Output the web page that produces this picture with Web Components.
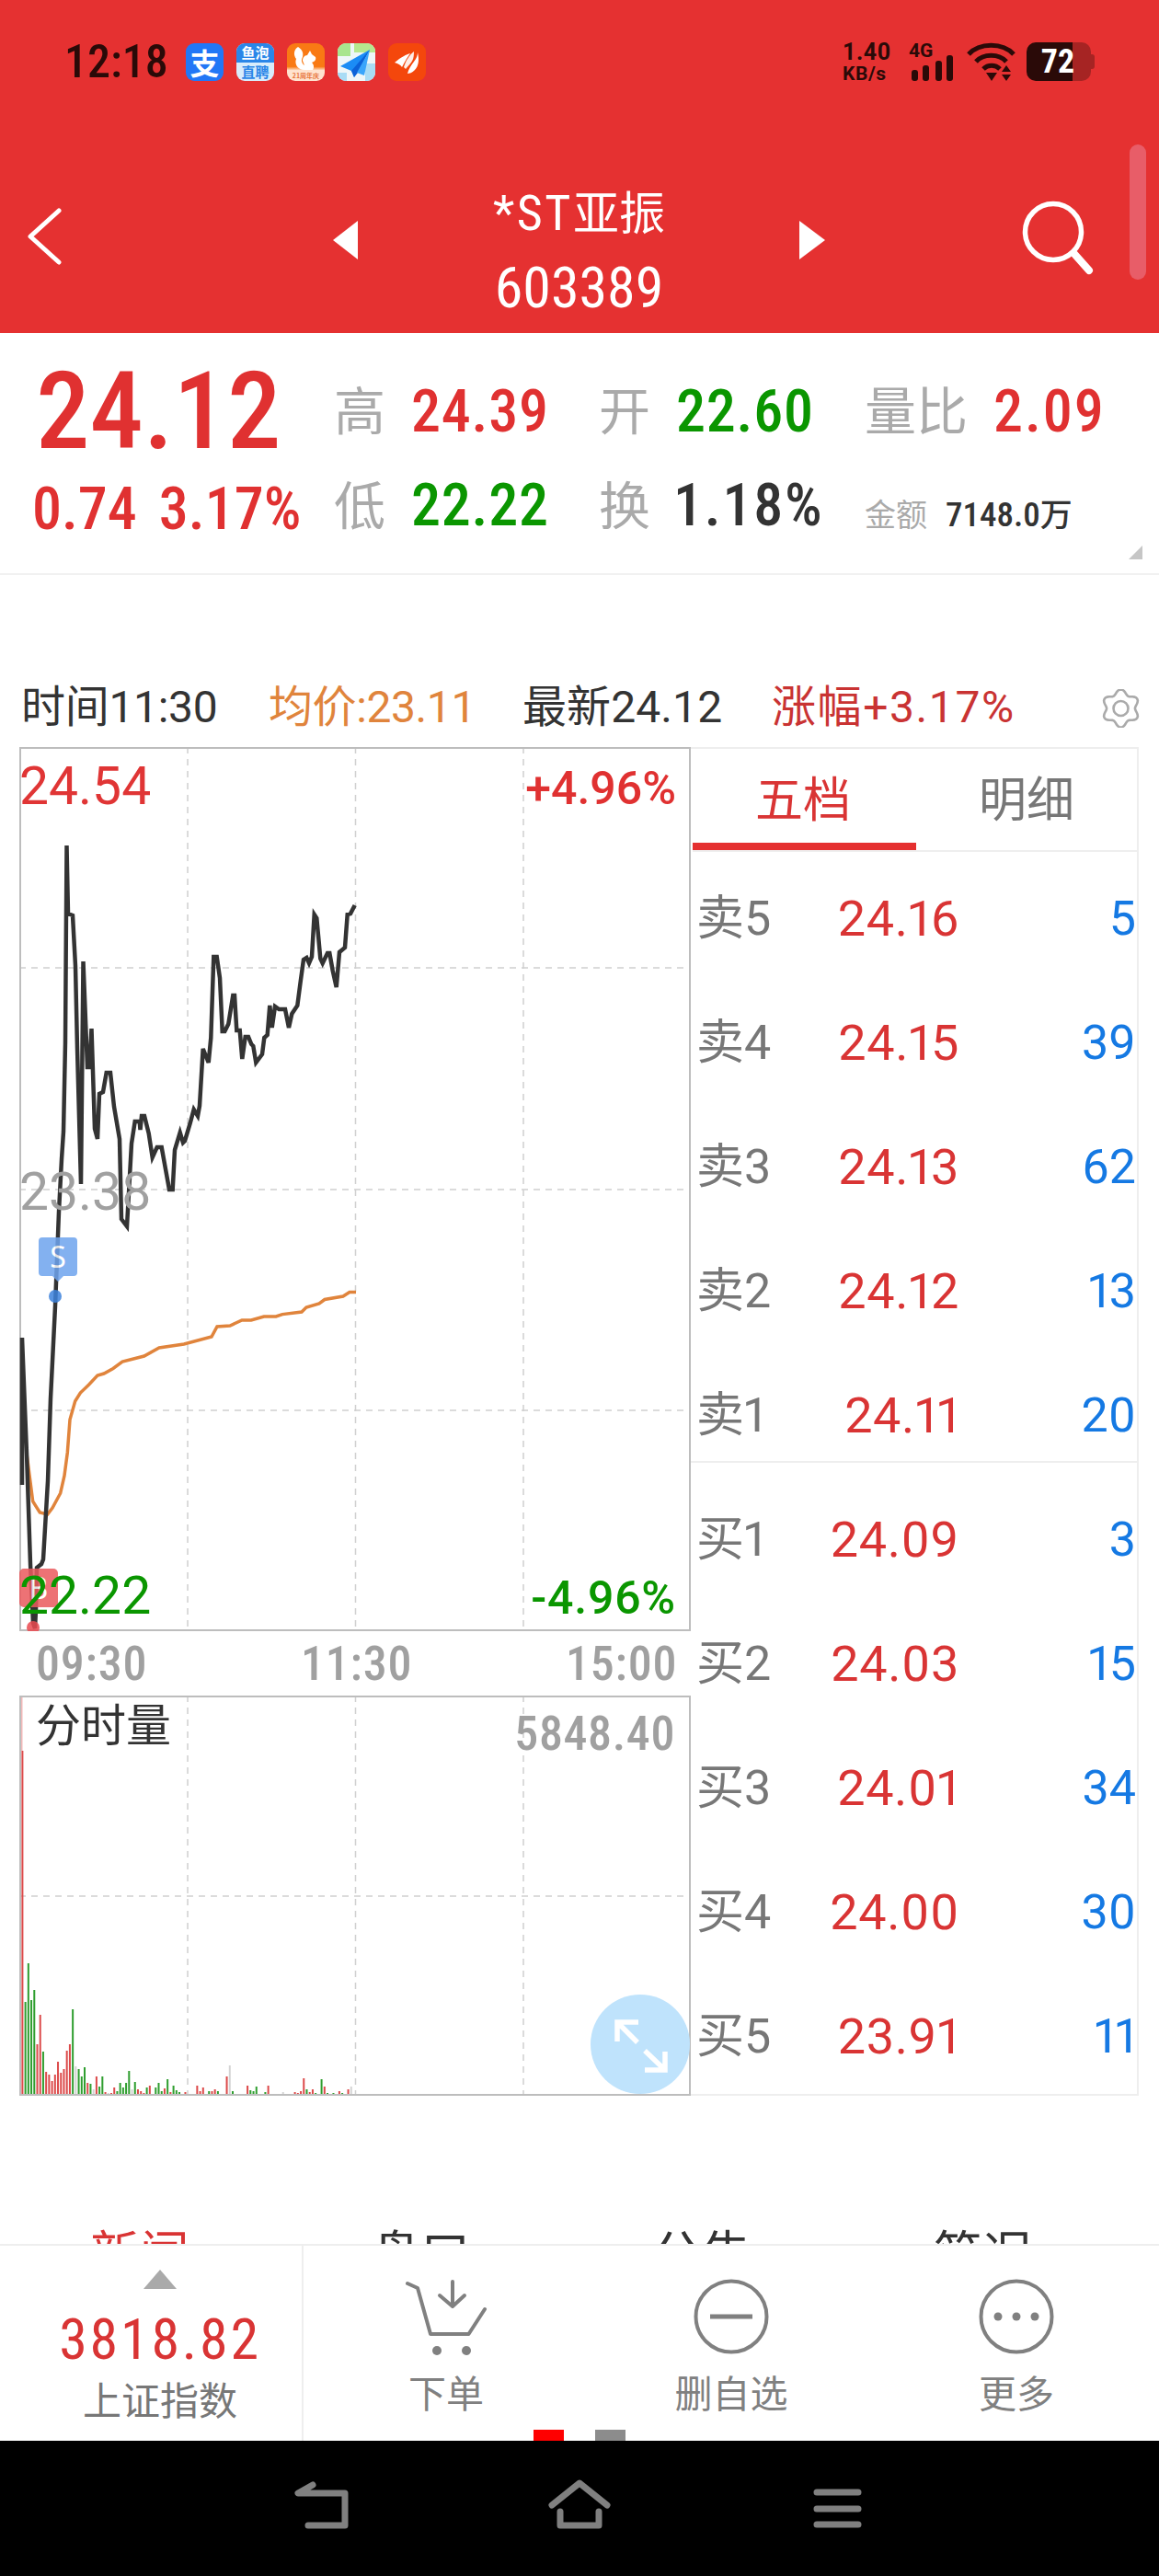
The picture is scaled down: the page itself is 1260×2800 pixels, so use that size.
<!doctype html>
<html lang="zh">
<head>
<meta charset="utf-8">
<title>*ST亚振</title>
<style>
html, body { margin: 0; background: #fff; }
body { width: 1260px; height: 2800px; overflow: hidden; font-family: Roboto, "Noto Sans CJK SC", sans-serif; }
</style>
</head>
<body>
<stock-page>
  <status-bar></status-bar>
  <nav-header name="*ST亚振" code="603389"></nav-header>
  <quote-panel></quote-panel>
  <info-row></info-row>
  <div style="display:flex;padding-left:21px;width:1219px">
    <div style="width:730px;flex:none">
      <price-chart></price-chart>
      <time-axis></time-axis>
      <volume-chart></volume-chart>
    </div>
    <order-book></order-book>
  </div>
  <news-tabs></news-tabs>
  <bottom-bar slot="footer"></bottom-bar>
  <system-nav slot="footer"></system-nav>
</stock-page>

<script>
const DIN = `Roboto, "Noto Sans CJK SC", sans-serif`;
const RED = "#e03131", GREEN = "#0a9600", DARK = "#333";

function define(name, html, init) {
    const template = document.createElement("template");
    template.innerHTML = html;
    customElements.define(name, class extends HTMLElement {
        constructor() {
            super();
            this.attachShadow({ mode: "open" });
            this.shadowRoot.appendChild(template.content.cloneNode(true));
        }
        connectedCallback() {
            if (init) init(this, this.shadowRoot);
        }
    });
}

define("stock-page", `
<style>
:host { display: block; width: 1260px; height: 2800px; }
main { height: 2439px; overflow: hidden; }
</style>
<main><slot></slot></main>
<slot name="footer"></slot>
`);

define("status-bar", `
<style>
:host { display: flex; align-items: center; height: 134px; background: #e53131; padding: 0 70px 0 70px; box-sizing: border-box; color: #2a0a08; }
.time { font: semi-condensed 500 50px/1 ${DIN}; width: 132px; }
.apps { display: flex; gap: 14px; margin-right: auto; }
.app { width: 41px; height: 41px; border-radius: 9px; overflow: hidden; display: block; font-family: "Noto Sans CJK SC", sans-serif; }
.zhi { background: #2277f6; color: #fff; font-size: 32px; font-weight: 700; line-height: 41px; text-align: center; overflow: visible; }
.yu { background: #d8ecfb; color: #2a86e8; font-size: 15px; font-weight: 700; line-height: 19px; text-align: center; }
.yu div { background: #2a86e8; color: #fff; height: 21px; line-height: 20px; }
.speed { width: 72px; text-align: left; }
.speed b { display: block; font: 700 25px/25px ${DIN}; letter-spacing: .6px; }
.speed span { display: block; font: 700 21px/22px ${DIN}; letter-spacing: .6px; }
.sig { width: 49px; height: 42px; }
.sig span { display: block; height: 18px; font: 700 21px/18px ${DIN}; }
svg { display: block; }
.sig svg { margin-top: -18px; }
.battery { width: 70px; height: 42px; border-radius: 10px; margin-left: 11px; display: flex; align-items: center; justify-content: center; background: linear-gradient(90deg, #2a0a08 50px, #a62423 50px); color: #fff; font: semi-condensed 700 36px/1 ${DIN}; padding-right: 2px; box-sizing: border-box; }
.nub { width: 4px; height: 16px; background: #a62423; border-radius: 0 3px 3px 0; }
</style>
<div class="time">12:18</div>
<div class="apps">
  <div class="app zhi">支</div>
  <div class="app yu"><div>鱼泡</div>直聘</div>
  <svg class="app" viewBox="0 0 41 41">
    <defs><linearGradient id="uc" x1="0" y1="0" x2="0" y2="1"><stop offset=".62" stop-color="#f97a14"/><stop offset=".72" stop-color="#ffe3cf"/></linearGradient></defs>
    <rect width="41" height="41" fill="url(#uc)"/>
    <path d="M12 4c-5 3-5 9-2 13-2 5 1 12 9 12h9c2-3 1-6-1-8 3-1 5-3 4-6l-4-3-2-4-3 5c-3 0-5 3-5 6l2 5c-3-2-4-6-2-9 1-4 0-8-5-11z" fill="#fff"/>
    <text x="20.5" y="38" font-size="7" font-weight="700" text-anchor="middle" fill="#e8763c" font-family="Noto Sans CJK SC">21周年庆</text>
  </svg>
  <svg class="app" viewBox="0 0 41 41">
    <rect width="41" height="41" fill="#eef6f8"/>
    <path d="M0 0h14v14H0z" fill="#a8e58e"/><path d="M18 0h23v10H18z" fill="#b6e88f"/>
    <path d="M30 22h11v19H30zM0 32h10v9H0z" fill="#a9dcf5"/>
    <path d="M35 7 3 25l12 5 3 7z" fill="#1b8cf5"/><path d="M35 7 15 30l3 7 4-5z" fill="#0b62d8"/><path d="M35 7 21 32l8 3z" fill="#39a5fb"/>
  </svg>
  <svg class="app" viewBox="0 0 41 41">
    <rect width="41" height="41" fill="#f4470c"/>
    <path d="M7 21c7-6 13-9 17-10-3 4-6 9-9 15-1-2-4-4-8-5z" fill="#fff"/>
    <path d="M17 26c2-7 6-13 11-17 0 6-1 9-3 12l-6 7z" fill="#fff" opacity=".9"/>
    <path d="M21 33c1-5 4-9 7-13 3-4 4-7 4-10 2 8 1 15-3 19-3 3-6 4-8 4z" fill="#fff"/>
  </svg>
</div>
<div class="speed"><b>1.40</b><span>KB/s</span></div>
<div class="sig"><span>4G</span>
<svg width="49" height="42" viewBox="0 0 49 42">
  <g fill="#2a0a08"><rect x="3" y="30" width="7" height="12" rx="3"/><rect x="15" y="25" width="7" height="17" rx="3"/><rect x="29" y="20" width="7" height="22" rx="3"/><rect x="41" y="14" width="7" height="28" rx="3"/></g>
</svg></div>
<svg width="54" height="42" viewBox="0 0 54 42" style="margin-left:14px" fill="none" stroke="#2a0a08" stroke-width="5">
  <path d="M2 13C14 0 39 0 51 13"/><path d="M10 21C18 12 35 12 43 21"/>
  <path d="M18 29c5-5 13-5 18 0"/>
  <path d="M21 33h12l-6 9z" fill="#2a0a08" stroke="none"/>
  <path d="M43 25l5 7H38zM43 42l5-7H38z" fill="#2a0a08" stroke="none"/>
</svg>
<div class="battery">72</div><div class="nub"></div>
`);

define("nav-header", `
<style>
:host { display: grid; grid-template-columns: 362px 28px 479px 28px 1fr; align-items: start; height: 228px; background: #e53131; color: #fff; position: relative; }
svg { display: block; }
.back { padding: 91px 0 0 28px; }
.tri { margin-top: 106px; }
.title { text-align: center; padding-top: 54px; }
.name { font: 400 50px/80px "Noto Sans CJK SC", sans-serif; height: 84px; }
.name b { font: semi-condensed 400 54px/80px ${DIN}; letter-spacing: 2.6px; }
.code { font: semi-condensed 400 62px/81px ${DIN}; }
.search { padding: 84px 0 0 213px; }
.scroll { position: absolute; left: 1228px; top: 23px; width: 18px; height: 147px; border-radius: 9px; background: #e85d68; }
</style>
<div class="back"><svg width="42" height="64" viewBox="0 0 42 64" fill="none" stroke="#fff" stroke-width="5" stroke-linecap="round" stroke-linejoin="round"><path d="M36 4 5 32 36 60"/></svg></div>
<svg class="tri" width="28" height="42" viewBox="0 0 28 42"><path d="M27 0v42L0 21z" fill="#fff"/></svg>
<div class="title"><div class="name"><b>*ST</b>亚振</div><div class="code" id="code"></div></div>
<svg class="tri" width="28" height="42" viewBox="0 0 28 42"><path d="M0 0v42l28-21z" fill="#fff"/></svg>
<div class="search"><svg width="84" height="86" viewBox="0 0 84 86" fill="none" stroke="#fff" stroke-linecap="round"><circle cx="35" cy="34" r="30.5" stroke-width="5.5"/><path d="M58 58 74 76" stroke-width="8"/></svg></div>
<div class="scroll"></div>
`, (host, root) => {
    root.getElementById("code").textContent = host.getAttribute("code");
});

define("quote-item", `
<style>
:host { display: flex; align-items: center; gap: 28px; }
.label { font: 400 56px/1 "Noto Sans CJK SC", sans-serif; color: #aaa; margin-bottom: 9px; }
.value { font: semi-condensed 500 64px/1 ${DIN}; letter-spacing: var(--ls, .8px); color: var(--tone, #333); margin-left: var(--shift, 0); }
</style>
<span class="label" id="label"></span><span class="value"><slot></slot></span>
`, (host, root) => {
    root.getElementById("label").textContent = host.getAttribute("label");
});

define("quote-panel", `
<style>
:host { display: grid; position: relative; box-sizing: border-box; height: 263px; padding-top: 33px; grid-template-columns: 363px 288px 289px 1fr; grid-template-rows: 105px 100px; border-bottom: 2px solid #f1f1f1; color: ${RED}; }
.big { font: semi-condensed 500 117px/1 ${DIN}; padding-left: 39px; align-self: center; }
.change { display: flex; gap: 24px; padding: 4px 0 0 35px; font: semi-condensed 500 64px/100px ${DIN}; }
.amount { display: flex; align-items: center; gap: 20px; padding-top: 16px; font: semi-condensed 500 37px/1 ${DIN}; color: #333; }
.amount span { font: 400 34px/1 "Noto Sans CJK SC", sans-serif; color: #aaa; }
.amount i { font: 500 35px/1 "Noto Sans CJK SC", sans-serif; }
.corner { position: absolute; left: 1227px; top: 231px; width: 0; height: 0; border-left: 15px solid transparent; border-bottom: 15px solid #c6c6c6; }
</style>
<div class="big">24.12</div>
<quote-item label="高" style="--tone:${RED}">24.39</quote-item>
<quote-item label="开" style="--tone:${GREEN}">22.60</quote-item>
<quote-item label="量比" style="--tone:${RED};--ls:2px">2.09</quote-item>
<div class="change"><span>0.74</span><span>3.17%</span></div>
<quote-item label="低" style="--tone:${GREEN}">22.22</quote-item>
<quote-item label="换" style="--ls:1.8px;--shift:-3px">1.18%</quote-item>
<div class="amount"><span>金额</span><div>7148.0<i>万</i></div></div>
<div class="corner"></div>
`);

define("info-row", `
<style>
:host { display: grid; box-sizing: border-box; height: 187px; padding: 102px 0 0 23px; grid-template-columns: 269px 276px 271px 358px 43px; font: 400 48px/84px Roboto, "Noto Sans CJK SC", sans-serif; color: #333; }
svg { align-self: center; display: block; }
</style>
<span style="letter-spacing:-.3px">时间11:30</span>
<span style="color:#e0843c;letter-spacing:-.4px">均价:23.11</span>
<span style="letter-spacing:.1px">最新24.12</span>
<span style="color:#c93333;letter-spacing:1.6px">涨幅+3.17%</span>
<svg width="43" height="42" viewBox="-21.5 -21 43 42" fill="none" stroke="#aaa" stroke-width="2.6"><path id="gear"/><circle r="8"/></svg>
`, (host, root) => {
    let d = "";
    for (let i = 0; i <= 72; i++) {
        const a = i * Math.PI / 36;
        const r = 18 + 2.6 * Math.cos(6 * a);
        d += (i ? "L" : "M") + (r * Math.sin(a)).toFixed(1) + " " + (-r * Math.cos(a)).toFixed(1);
    }
    root.getElementById("gear").setAttribute("d", d + "z");
});

const grid = (top, bottom, ys) => {
    let s = "";
    for (const x of [204, 386.5, 569]) s += `<path d="M${x} ${top}V${bottom}"/>`;
    for (const y of ys) s += `<path d="M21 ${y}H751"/>`;
    return `<g fill="none" stroke="#d0d0d0" stroke-width="1.5" stroke-dasharray="7 6">${s}</g>`;
};

const priceLine = "24,1454 24,1614 24,1454 29,1580 33,1700 36,1764 38,1770 39,1750 40,1704 45,1700 47,1695 52,1610 55,1520 60,1420 64,1317 67,1260 69,1230 71,1133 72.5,919 74,993 79,995 82,1050 84,1140 88,1287 90.5,1045 95,1160 97.3,1160 99.5,1118 103,1227 106,1238 108,1189 112,1187 115.7,1166 120,1166 124,1203 130,1238 132,1325 138,1333 143,1243 146.7,1219 151.7,1219 152.5,1228 154,1213 157,1213 161.7,1232 165.7,1258 170.7,1247 175.7,1247 184,1293 187.7,1293 190,1250 195.7,1231 199,1242 201,1240 206.7,1221 210.7,1206 215,1213 217,1202 220.7,1140 226.7,1155 229.3,1128 232.3,1040 235.7,1040 239,1063 241.7,1121 244.3,1121 248.3,1113 253.3,1082 255,1082 257.3,1120 260.7,1120 263.3,1151 266.7,1127 270,1127 273.3,1135 275.3,1137 278.3,1155 285,1146 287.3,1128 290.7,1125 293.3,1093 295.7,1117 299,1094 303.3,1097 310,1097 314,1117 317.3,1102 323.3,1093 326.7,1067 330,1043 333.3,1041 336,1047 339,1040 341.7,994 344.3,998 348.3,1042 350.7,1047 356,1036 358.3,1036 361.7,1055 365.7,1073 369,1035 375,1030 377.7,994 381,993 385.7,984";
const avgLine = "29,1580 35.7,1632 43.3,1644 51.7,1646 57,1639 65.7,1623 70,1604 73.3,1579 76,1543 81.7,1523 87.3,1514 96.7,1505 106,1495 113,1493 123,1487.5 133,1480 156.7,1474 173,1465 200,1461 230,1453 236,1442 250,1441 263,1435 273,1435 287,1431 300,1431 307,1428.6 328,1426 333,1421 347,1417 353,1412.5 373,1409 380,1404.6 387,1404.6";

define("price-chart", `
<style>
:host { display: block; position: relative; width: 730px; height: 961px; font-family: Roboto, sans-serif; }
svg { display: block; }
span { position: absolute; line-height: 1; }
.y { font-size: 57px; left: 0; }
.p { font: 500 50px/1 ${DIN}; right: 16px; }
</style>
<svg width="730" height="961" viewBox="21 812 730 961">
  ${grid(812, 1773, [1052, 1293, 1533])}
  <rect x="22" y="813" width="728" height="959" fill="none" stroke="#bdbdbd" stroke-width="2"/>
  <polyline points="${avgLine}" fill="none" stroke="#e0843c" stroke-width="3.5"/>
  <polyline points="${priceLine}" fill="none" stroke="#333" stroke-width="4.5" stroke-linejoin="miter"/>
  <g opacity=".85">
    <path d="M46 1345h34a4 4 0 0 1 4 4v34a4 4 0 0 1-4 4H69l-6 6-6-6H46a4 4 0 0 1-4-4v-34a4 4 0 0 1 4-4z" fill="#6ea4ee"/>
    <rect x="21" y="1705" width="42" height="42" rx="5" fill="#ea5a5e"/>
    <circle cx="60" cy="1409" r="7" fill="#3d82dc"/>
    <circle cx="36" cy="1769" r="7" fill="#ea4a50"/>
    <text x="63" y="1378" font-size="32" fill="#fff" text-anchor="middle" font-family="Noto Sans">S</text>
    <text x="42" y="1738" font-size="32" fill="#fff" text-anchor="middle" font-family="Noto Sans">B</text>
  </g>
</svg>
<span class="y" style="top:14px;color:#e03535">24.54</span>
<span class="p" style="top:20px;color:${RED}">+4.96%</span>
<span class="y" style="top:455px;color:#a0a0a0">23.38</span>
<span class="y" style="top:894px;color:${GREEN}">22.22</span>
<span class="p" style="top:900px;color:${GREEN};letter-spacing:.8px">-4.96%</span>
`);

define("time-axis", `
<style>
:host { display: grid; grid-template-columns: 288px 288px 1fr; height: 70px; padding-left: 18px; font: semi-condensed 500 52px/72px ${DIN}; letter-spacing: .8px; color: #a0a0a0; box-sizing: border-box; }
</style>
<span>09:30</span><span>11:30</span><span>15:00</span>
`);

// r 红 g 绿 n 平, 数值是柱高
const volumes = "r375 g102 g144 g104 g115 r56 r88 g48 r26 r23 r16 r23 r37 r25 r29 r49 r56 g94 n32 g29 g21 g31 r14 g13 n7 r21 g10 g21 r4 n3 r3 r9 g5 g14 g9 g14 g27 n7 g15 r7 r5 r3 g9 r11 r1 g9 g14 g5 r8 g18 r4 g11 g6 g4 n2 r4 r1 r2 g2 r11 r5 r9 g2 g5 r5 r7 g5 g2 r2 r21 n33 g5 g2 r1 r1 r2 r11 g6 g5 g10 r1 g2 g4 r11 r1 g1 g1 g1 n4 g1 g2 g2 r4 r3 r5 r19 g7 r4 r7 g3 g2 g18 r10 g3 g2 g3 g2 r5 g3 g1 r7 n10 r2".split(" ");

define("volume-chart", `
<style>
:host { display: block; position: relative; width: 730px; height: 435px; }
svg { display: block; }
span { position: absolute; line-height: 1; }
.title { left: 18px; top: 4px; font: 400 49px/1 "Noto Sans CJK SC", sans-serif; color: #333; }
.max { right: 17px; top: 16px; font: semi-condensed 500 52px/1 ${DIN}; letter-spacing: .6px; color: #a0a0a0; }
</style>
<svg width="730" height="435" viewBox="21 1843 730 435">
  ${grid(1843, 2278, [2061])}
  <path d="M23.5 1843V1903" stroke="#f2b8b8" stroke-width="2"/>
  <g id="bars"></g>
  <rect x="22" y="1844" width="728" height="433" fill="none" stroke="#bdbdbd" stroke-width="2"/>
  <circle cx="696" cy="2222" r="54" fill="#bfe3fc"/>
  <path d="M671 2219V2198H694M671 2198 693 2220M701 2229 723 2250M723 2230V2250H701" fill="none" stroke="#fff" stroke-width="5.5"/>
</svg>
<span class="title">分时量</span>
<span class="max">5848.40</span>
`, (host, root) => {
    const colors = { r: "#dc4a4a", g: "#2f9e2f", n: "#d4d4d4" };
    const step = (384 - 23.4) / (volumes.length - 1);
    root.getElementById("bars").innerHTML = volumes.map((v, i) => {
        const h = +v.slice(1);
        return `<rect x="${(23.4 + i * step).toFixed(2)}" y="${2278 - h}" width="2" height="${h}" fill="${colors[v[0]]}"/>`;
    }).join("");
});

define("book-row", `
<style>
:host { display: grid; grid-template-columns: 122px 164px 192px; height: 135px; align-items: center; padding-left: 6px; font: 400 52px/1 Roboto, "Noto Sans CJK SC", sans-serif; font-feature-settings: "pnum"; }
.label { color: #777; }
.price { color: #d93434; text-align: right; font-size: 54px; letter-spacing: .6px; }
.qty { color: #1579e3; text-align: right; font-size: 52px; }
</style>
<span class="label"><slot name="label"></slot></span>
<span class="price"><slot name="price"></slot></span>
<span class="qty"><slot name="qty"></slot></span>
`);

define("order-book", `
<style>
:host { display: block; position: relative; box-sizing: border-box; width: 487px; height: 1466px; border: solid #eee; border-width: 2px 2px 2px 0; font-family: Roboto, "Noto Sans CJK SC", sans-serif; }
.tabs { display: grid; grid-template-columns: 243px 1fr; height: 110px; border-bottom: 2px solid #eee; margin-left: 2px; font: 400 52px/104px "Noto Sans CJK SC", sans-serif; text-align: center; }
.on { color: #d93434; border-bottom: 8px solid #e53030; height: 110px; box-sizing: border-box; padding-right: 3px; }
.off { color: #777; }
.line { position: absolute; left: 0; right: 0; top: 774px; border-top: 2px solid #eee; }
#rows { margin-top: 5px; }
</style>
<div class="tabs"><div class="on">五档</div><div class="off">明细</div></div>
<div id="rows"></div>
<div class="line"></div>
`, (host, root) => {
    const data = [["卖5","24.16","5"],["卖4","24.15","39"],["卖3","24.13","62"],["卖2","24.12","13"],["卖1","24.11","20"],
                  ["买1","24.09","3"],["买2","24.03","15"],["买3","24.01","34"],["买4","24.00","30"],["买5","23.91","11"]];
    root.getElementById("rows").innerHTML = data.map(([a, b, c]) =>
        `<book-row><span slot="label">${a}</span><span slot="price">${b}</span><span slot="qty">${c}</span></book-row>`).join("");
});

define("news-tabs", `
<style>
:host { display: grid; grid-template-columns: repeat(4, 305.5px); margin: 142px 0 0 -1px; font: 400 54px/1 "Noto Sans CJK SC", sans-serif; color: #333; text-align: center; }
</style>
<span style="color:#d93434">新闻</span><span>盘口</span><span>公告</span><span>简况</span>
`);

define("bar-action", `
<style>
:host { display: flex; flex-direction: column; align-items: center; height: 212px; box-sizing: border-box; padding-top: 33px; color: #808080; font: 400 41px/1 "Noto Sans CJK SC", sans-serif; }
::slotted(svg) { display: block; height: 90px; }
span { margin-top: 15px; }
</style>
<slot name="icon"></slot><span><slot></slot></span>
`);

define("bottom-bar", `
<style>
:host { display: grid; grid-template-columns: 330px repeat(3, 310px); height: 214px; box-sizing: border-box; border-top: 2px solid #eee; position: relative; background: #fff; }
.index { display: flex; flex-direction: column; align-items: center; border-right: 2px solid #eee; padding-left: 20px; box-sizing: border-box; }
.up { margin-top: 26px; width: 0; height: 0; border: solid transparent; border-width: 0 18.5px 21px; border-bottom-color: #aaa; }
.num { font: semi-condensed 400 62px/1 ${DIN}; letter-spacing: 2.8px; color: #d93434; margin-top: 24px; }
.name { font: 400 42px/1 "Noto Sans CJK SC", sans-serif; color: #777; margin-top: 12px; }
.dot { position: absolute; top: 200px; width: 33px; height: 12px; }
</style>
<div class="index"><div class="up"></div><div class="num">3818.82</div><div class="name">上证指数</div></div>
<bar-action>
  <svg slot="icon" width="90" height="90" viewBox="440 2472 90 90" fill="none" stroke="#808080" stroke-width="4" stroke-linecap="round" stroke-linejoin="round">
    <path d="M443 2480 454 2485 468 2535H509.5L527 2508"/><path d="M492 2478V2505M478 2493 492 2505 505 2493"/>
    <circle cx="475" cy="2553" r="5" fill="#808080" stroke="none"/><circle cx="507" cy="2553" r="5" fill="#808080" stroke="none"/>
  </svg>下单</bar-action>
<bar-action>
  <svg slot="icon" width="84" height="90" viewBox="-42 -44 84 90" fill="none" stroke="#808080" stroke-width="4"><circle r="38.5"/><path d="M-23 0H23" stroke-width="5"/></svg>删自选</bar-action>
<bar-action>
  <svg slot="icon" width="84" height="90" viewBox="-42 -44 84 90" fill="none" stroke="#808080" stroke-width="4"><circle r="38.5"/><g fill="#808080" stroke="none"><circle cx="-20" r="4.5"/><circle r="4.5"/><circle cx="20" r="4.5"/></g></svg>更多</bar-action>
<div class="dot" style="left:580px;background:#f00"></div>
<div class="dot" style="left:647px;background:#8c8c8c"></div>
`);

define("system-nav", `
<style>
:host { display: block; height: 147px; background: #000; }
svg { display: block; }
</style>
<svg width="1260" height="147" viewBox="0 2653 1260 147" fill="none" stroke="#808080" stroke-width="7" stroke-linecap="round" stroke-linejoin="round">
  <path d="M340 2701 324 2710H375V2745H335"/>
  <path d="M600 2723 630 2699 660 2723"/><path d="M609 2730V2745H651V2730"/>
  <path d="M888 2709H933M888 2727H933M888 2744H933"/>
</svg>
`);
</script>
</body>
</html>
